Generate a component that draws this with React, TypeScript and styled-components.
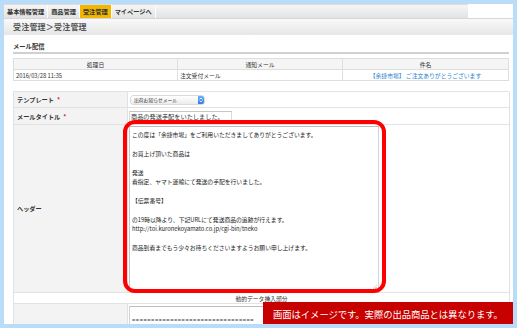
import styled, { createGlobalStyle } from "styled-components";

const GlobalStyle = createGlobalStyle`
  html, body {
    margin: 0;
    padding: 0;
    background: #b9dcf8;
  }
  body {
    font-family: "Noto Sans CJK JP", "Noto Sans", sans-serif;
    color: #333;
  }
`;

const Frame = styled.div`
  position: relative;
  margin: 4px;
  width: 509px;
  height: 320px;
  overflow: hidden;
  background: #fff;
`;

const TabBar = styled.div`
  display: flex;
  width: 464px;
  height: 13px;
  background: linear-gradient(#f6f6f6, #e2e2e2);
  border-top: 1px solid #dcdcdc;
`;

const Tab = styled.div<{ $active?: boolean }>`
  display: flex;
  align-items: center;
  padding: 0 3px;
  font-size: 6.2px;
  font-weight: 700;
  color: #333;
  border-right: 1px solid #fff;
  background: ${(p) => (p.$active ? "#f2b600" : "transparent")};
`;

const TitleBar = styled.div`
  display: flex;
  align-items: center;
  height: 15px;
  padding-left: 9px;
  background: linear-gradient(#f9f9f9, #e7e7e7);
  border-top: 1px solid #d6d6d6;
  border-bottom: 1px solid #e9e9e9;
  font-size: 8px;
  font-weight: 700;
  color: #555;
  letter-spacing: 0.2px;
`;

const Main = styled.div`
  padding: 6px 4px 0 9px;
`;

const SectionTitle = styled.div`
  font-size: 6.3px;
  font-weight: 700;
  color: #333;
  height: 11px;
  line-height: 11px;
  border-bottom: 2px solid #d0d0d0;
`;

const LogTable = styled.div`
  display: grid;
  grid-template-columns: 164px 165px 1fr;
  margin-top: 4px;
  border-top: 1px solid #dedede;
  border-left: 1px solid #dedede;
`;

const LogCell = styled.div<{ $head?: boolean; $link?: boolean }>`
  height: 10px;
  display: flex;
  align-items: center;
  justify-content: ${(p) => (p.$head ? "center" : "flex-start")};
  padding: 0 2px;
  font-size: 5.8px;
  color: ${(p) => (p.$link ? "#2a7fd0" : "#333")};
  background: ${(p) => (p.$head ? "#f5f5f5" : "#fff")};
  border-right: 1px solid #dedede;
  border-bottom: 1px solid #dedede;
  white-space: nowrap;
  &:nth-child(3n) {
    justify-content: center;
  }
`;

const FormTable = styled.div`
  display: grid;
  grid-template-columns: 114px 1fr;
  margin-top: 10px;
  border-top: 1px solid #e2e2e2;
  border-left: 1px solid #e2e2e2;
`;

const Label = styled.div<{ $h: number }>`
  height: ${(p) => p.$h}px;
  display: flex;
  align-items: center;
  padding-left: 3px;
  font-size: 6.2px;
  font-weight: 700;
  color: #333;
  background: #f3f3f3;
  border-right: 1px solid #e2e2e2;
  border-bottom: 1px solid #e2e2e2;
`;

const Req = styled.span`
  color: #e0201a;
  margin-left: 3px;
`;

const Field = styled.div<{ $h: number }>`
  height: ${(p) => p.$h}px;
  display: flex;
  align-items: center;
  padding-left: 1px;
  border-right: 1px solid #e2e2e2;
  border-bottom: 1px solid #e2e2e2;
  position: relative;
`;

const SpanRow = styled.div`
  grid-column: 1 / 3;
  height: 10px;
  display: flex;
  align-items: center;
  justify-content: center;
  font-size: 5.8px;
  color: #333;
  border-right: 1px solid #e2e2e2;
  border-bottom: 1px solid #e2e2e2;
`;

const Select = styled.div`
  display: flex;
  align-items: center;
  justify-content: space-between;
  margin-left: 2px;
  width: 73px;
  height: 8px;
  border-radius: 2px;
  background: linear-gradient(#fff, #ececec);
  box-shadow: 0 0 0 0.5px #b5b5b5;
  font-size: 4.8px;
  padding-left: 3px;
  box-sizing: border-box;
  color: #333;
`;

const SelectArrow = styled.div`
  width: 6px;
  height: 8px;
  border-radius: 0 2px 2px 0;
  background: linear-gradient(#6fb0f4, #2d7fe6);
  display: flex;
  align-items: center;
  justify-content: center;
`;

const TextInput = styled.div`
  width: 103px;
  height: 11px;
  box-sizing: border-box;
  border: 1px solid #dadada;
  border-top-color: #c6c6c6;
  padding-left: 1px;
  display: flex;
  align-items: center;
  font-size: 6.2px;
  color: #333;
  white-space: nowrap;
  background: #fff;
`;

const TextArea = styled.div`
  position: relative;
  width: 250px;
  height: 165px;
  box-sizing: border-box;
  border: 1px solid #d4d4d4;
  border-top-color: #bdbdbd;
  border-left-color: #c6c6c6;
  padding: 3px 2px;
  font-size: 5.8px;
  line-height: 9.4px;
  color: #222;
  white-space: pre;
  background: #fff;
`;

const Grip = styled.svg`
  position: absolute;
  right: 1px;
  bottom: 1px;
`;

const Highlight = styled.div`
  position: absolute;
  left: -7px;
  top: -7px;
  right: -8px;
  bottom: -3px;
  border: 4px solid #ff0000;
  border-radius: 12px;
  pointer-events: none;
`;

const TopAligned = styled(Field)`
  align-items: flex-start;
  padding-top: 2px;
  box-sizing: border-box;
`;

const SmallArea = styled.div`
  width: 380px;
  height: 30px;
  box-sizing: border-box;
  border: 1px solid #d4d4d4;
  border-top-color: #bdbdbd;
  padding: 9px 2px 0;
  font-size: 5.8px;
  line-height: 7px;
  letter-spacing: 0.6px;
  color: #333;
  white-space: nowrap;
  overflow: hidden;
`;

const Banner = styled.div`
  position: absolute;
  right: 0;
  bottom: -1px;
  width: 250px;
  height: 23px;
  background: #c70000;
  color: #fff;
  font-size: 9.4px;
  display: flex;
  align-items: center;
  padding-left: 10px;
  box-sizing: border-box;
  white-space: nowrap;
  letter-spacing: -0.1px;
`;

const mailBody = `この度は「余捷市場」をご利用いただきましてありがとうございます。

お買上げ頂いた商品は

発送
着指定、ヤマト運輸にて発送の手配を行いました。

【伝票番号】

の19時以降より、下記URLにて発送商品の追跡が行えます。
http://toi.kuronekoyamato.co.jp/cgi-bin/tneko

商品到着までもう少々お待ちくださいますようお願い申し上げます。`;

export default function App() {
  return (
    <>
      <GlobalStyle />
      <Frame>
        <TabBar>
          <Tab>基本情報管理</Tab>
          <Tab>商品管理</Tab>
          <Tab $active>受注管理</Tab>
          <Tab>マイページへ</Tab>
        </TabBar>
        <TitleBar>受注管理＞受注管理</TitleBar>
        <Main>
          <SectionTitle>メール配信</SectionTitle>
          <LogTable>
            <LogCell $head>処理日</LogCell>
            <LogCell $head>通知メール</LogCell>
            <LogCell $head>件名</LogCell>
            <LogCell>2016/03/28 11:35</LogCell>
            <LogCell>注文受付メール</LogCell>
            <LogCell $link>【余捷市場】 ご注文ありがとうございます</LogCell>
          </LogTable>
          <FormTable>
            <Label $h={15}>
              テンプレート<Req>*</Req>
            </Label>
            <Field $h={15}>
              <Select>
                出荷お知らせメール
                <SelectArrow>
                  <svg width="4" height="6" viewBox="0 0 4 6">
                    <path d="M0.6 2.4 L2 1 L3.4 2.4 M0.6 3.6 L2 5 L3.4 3.6" stroke="#fff" strokeWidth="0.8" fill="none" />
                  </svg>
                </SelectArrow>
              </Select>
            </Field>
            <Label $h={16}>
              メールタイトル<Req>*</Req>
            </Label>
            <Field $h={16}>
              <TextInput>商品の発送手配をいたしました。</TextInput>
            </Field>
            <Label $h={167}>ヘッダー</Label>
            <Field $h={167}>
              <TextArea>
                {mailBody}
                <Grip width="5" height="5" viewBox="0 0 5 5">
                  <path d="M1 5 L5 1 M3 5 L5 3" stroke="#aaa" strokeWidth="0.6" />
                </Grip>
                <Highlight />
              </TextArea>
            </Field>
            <SpanRow>動的データ挿入部分</SpanRow>
            <Label $h={30} />
            <TopAligned $h={30}>
              <SmallArea>================================</SmallArea>
            </TopAligned>
          </FormTable>
        </Main>
        <Banner>画面はイメージです。実際の出品商品とは異なります。</Banner>
      </Frame>
    </>
  );
}
